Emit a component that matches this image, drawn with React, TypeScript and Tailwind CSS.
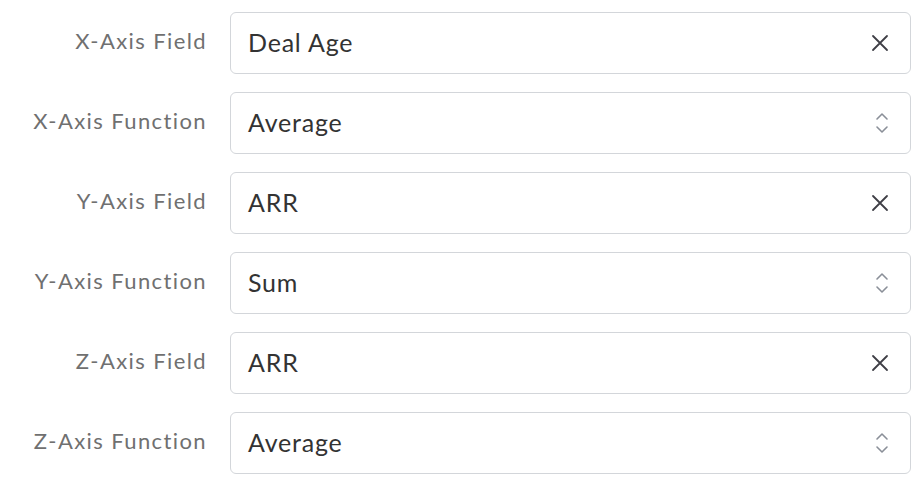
import React from "react";

type Row = { label: string; value: string; kind: "clear" | "select" };

const rows: Row[] = [
  { label: "X-Axis Field", value: "Deal Age", kind: "clear" },
  { label: "X-Axis Function", value: "Average", kind: "select" },
  { label: "Y-Axis Field", value: "ARR", kind: "clear" },
  { label: "Y-Axis Function", value: "Sum", kind: "select" },
  { label: "Z-Axis Field", value: "ARR", kind: "clear" },
  { label: "Z-Axis Function", value: "Average", kind: "select" },
];

function ClearIcon() {
  return (
    <svg width="18" height="18" viewBox="0 0 18 18" fill="none">
      <path d="M2 2L16 16M16 2L2 16" stroke="#3f3f46" strokeWidth="1.8" strokeLinecap="round" />
    </svg>
  );
}

function SelectIcon() {
  return (
    <svg width="14" height="22" viewBox="0 0 14 22" fill="none">
      <path d="M2 7L7 2L12 7" stroke="#8a8f98" strokeWidth="1.6" strokeLinecap="round" strokeLinejoin="round" />
      <path d="M2 15L7 20L12 15" stroke="#8a8f98" strokeWidth="1.6" strokeLinecap="round" strokeLinejoin="round" />
    </svg>
  );
}

export default function App() {
  return (
    <div
      className="w-[922px] h-[486px] bg-white pt-[12px] pr-[11px] flex flex-col gap-[18px]"
      style={{ fontFamily: "Lato, 'Open Sans', sans-serif" }}
    >
      {rows.map((r) => (
        <div key={r.label} className="flex items-center">
          <div className="w-[207px] shrink-0 text-right text-[22px] tracking-[1.4px] text-[#707070] -mt-[5px]">
            {r.label}
          </div>
          <div className="ml-[23px] flex-1 h-[62px] border border-[#d3d6da] rounded-[6px] flex items-center justify-between pl-[17px] pr-[21px]">
            <span className="text-[25px] tracking-[0.8px] text-[#333333]">{r.value}</span>
            {r.kind === "clear" ? <ClearIcon /> : <SelectIcon />}
          </div>
        </div>
      ))}
    </div>
  );
}
